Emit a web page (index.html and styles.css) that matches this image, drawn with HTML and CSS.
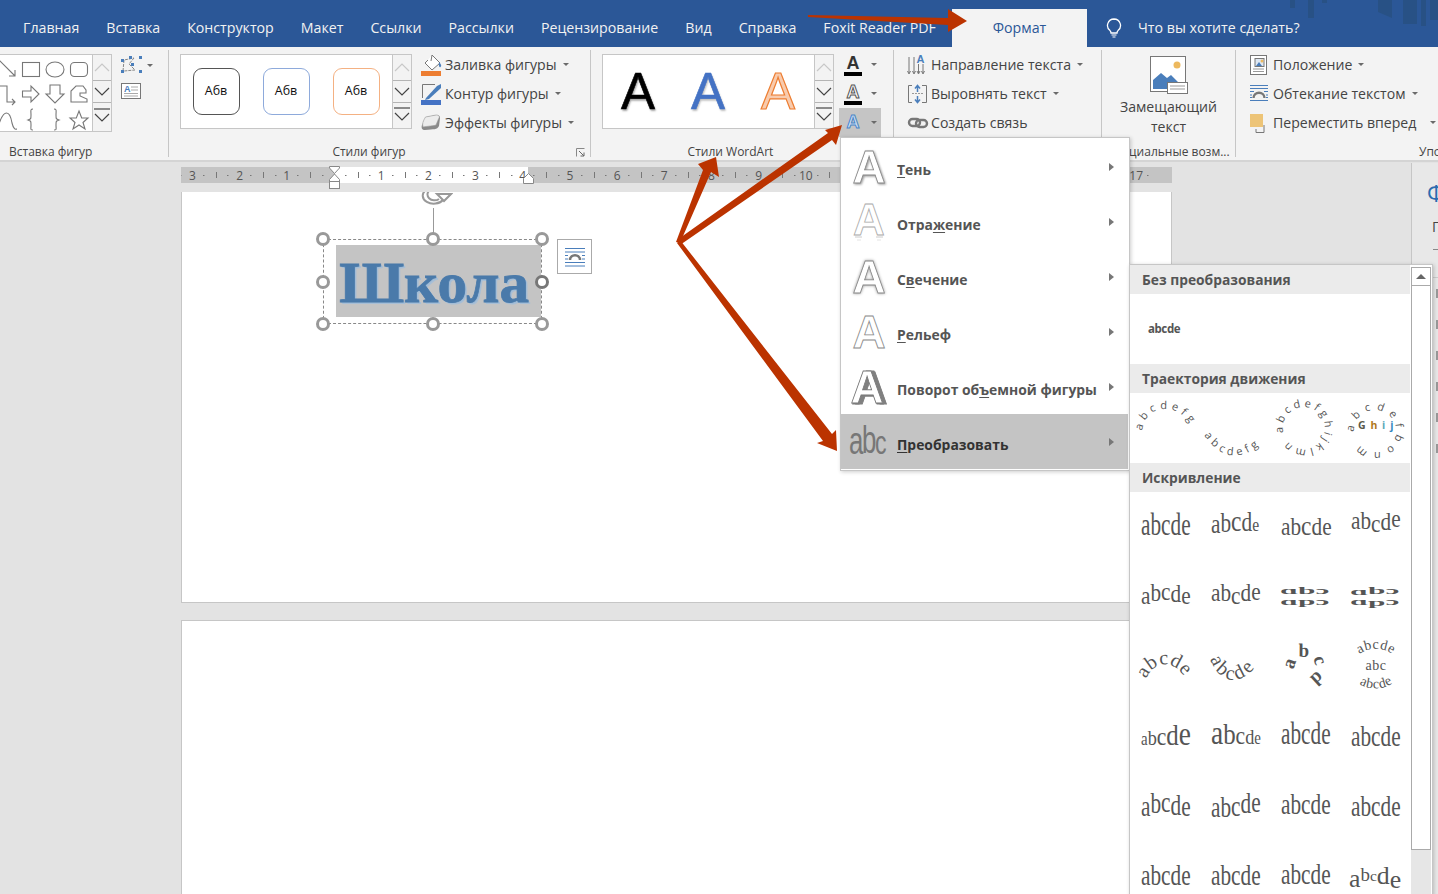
FILE: index.html
```html
<!DOCTYPE html>
<html lang="ru">
<head>
<meta charset="utf-8">
<title>Формат</title>
<link rel="stylesheet" href="styles.css">
</head>
<body>
<div class="app">
  <header class="tabbar">
    <nav class="tabs">
      <span class="tab">Главная</span><span class="tab">Вставка</span><span class="tab">Конструктор</span><span class="tab">Макет</span><span class="tab">Ссылки</span><span class="tab">Рассылки</span><span class="tab">Рецензирование</span><span class="tab">Вид</span><span class="tab">Справка</span><span class="tab">Foxit Reader PDF</span>
    </nav>
    <span class="tab-active">Формат</span>
    <div class="tellme">
      <svg class="bulb" width="16" height="20" viewBox="0 0 16 20"><path d="M8 1a6.5 6.5 0 0 0-4 11.6c.8.8 1 1.6 1 2.4h6c0-.8.2-1.6 1-2.4A6.5 6.5 0 0 0 8 1z" fill="none" stroke="#fff" stroke-width="1.3"/><path d="M5.5 17h5M6.5 19h3" stroke="#fff" stroke-width="1.2"/></svg>
      <span>Что вы хотите сделать?</span>
    </div>
    <svg class="deco" width="152" height="26" viewBox="0 0 152 26"><g fill="#27507f" opacity=".75"><rect x="4" width="5" height="8"/><rect x="22" width="6" height="18"/><rect x="36" width="5" height="3"/><path d="M92 0l0 12 14 6V0z"/><rect x="117" width="14" height="24"/><rect x="135" width="5" height="26"/><rect x="144" width="8" height="20"/></g></svg>
  </header>

  <section class="ribbon">
    <div class="group g-insert">
      <div class="group-body">
        <div class="gallery gallery-shapes">
          <svg width="92" height="76" viewBox="0 0 92 76" fill="none" stroke="#777" stroke-width="1.1">
            <path d="M-2 4L15 21M15 15v6h-6"/><rect x="22.500" y="7.500" width="17" height="14"/><ellipse cx="55" cy="14.500" rx="9" ry="7.500"/><rect x="70.500" y="7.500" width="17" height="14" rx="4"/>
            <path d="M-2 31H7V47H15M12 44l3 3-3 3"/><path d="M22.500 36H31V31L39 39L31 47V42H22.500z"/><path d="M50 30H60V39H64L55 48L46 39H50z"/><path d="M71 47V36L76 31H83L86 35V38H80V41L87 44V47z"/>
            <path d="M-2 72C4 52 10 56 12 68C14 76 16 74 17 74"/><path d="M33 57c-3 0-2 2-2 6s0 4-3 5c3 1 3 1 3 5s-1 5 2 5" transform="translate(0 -3)"/><path d="M52 57c3 0 2 2 2 6s0 4 3 5c-3 1-3 1-3 5s1 5-2 5" transform="translate(2 -3)"/><path d="M79 56L81.700 63H88L83 67.500L85 74L79 70L73 74L75 67.500L70 63H76.300z"/>
          </svg>
        </div>
        <div class="spin spin-tall"><span class="spin-up"><svg width="18" height="12" viewBox="0 0 18 12"><path d="M2 9L9 2L16 9" fill="none" stroke="#c8c8c8" stroke-width="1.2"/></svg></span><span class="spin-down"><svg width="18" height="12" viewBox="0 0 18 12"><path d="M2 2L9 9L16 2" fill="none" stroke="#444" stroke-width="1.2"/></svg></span><span class="spin-more"><svg width="18" height="18" viewBox="0 0 18 18"><path d="M1 1H17" stroke="#444" stroke-width="1.2"/><path d="M2 6L9 13L16 6" fill="none" stroke="#444" stroke-width="1.2"/></svg></span></div>
        <div class="edit-tools">
          <div class="edit-row"><svg width="22" height="18" viewBox="0 0 22 18"><path d="M2 15L3 4L13 2M13 2L8 8L14 14L3 15" fill="none" stroke="#888" stroke-dasharray="3 1"/><g fill="#4a7ebb"><rect x="0" y="3" width="3" height="3"/><rect x="8" y="0" width="3" height="3"/><rect x="18" y="0" width="3" height="3"/><rect x="10" y="7" width="3" height="3"/><rect x="0" y="14" width="3" height="3"/><rect x="18" y="14" width="3" height="3"/></g></svg><i class="caret"></i></div>
          <div class="edit-row edit-row-b"><svg width="20" height="17" viewBox="0 0 20 17"><rect x=".5" y=".5" width="19" height="15" fill="#fff" stroke="#777"/><path d="M10 4H17M10 7H17M3 10.500H17M3 13H17" stroke="#aaa"/><text x="3" y="8.500" class="ico-a">A</text></svg></div>
        </div>
      </div>
      <div class="group-label label-insert">Вставка фигур</div>
    </div>

    <div class="group g-styles">
      <div class="group-body">
        <div class="gallery gallery-wide">
          <span class="gitem"><span class="abv abv-k">Абв</span></span>
          <span class="gitem"><span class="abv abv-b">Абв</span></span>
          <span class="gitem"><span class="abv abv-o">Абв</span></span>
        </div>
        <div class="spin"><span class="spin-up"><svg width="18" height="12" viewBox="0 0 18 12"><path d="M2 9L9 2L16 9" fill="none" stroke="#c8c8c8" stroke-width="1.2"/></svg></span><span class="spin-down"><svg width="18" height="12" viewBox="0 0 18 12"><path d="M2 2L9 9L16 2" fill="none" stroke="#444" stroke-width="1.2"/></svg></span><span class="spin-more"><svg width="18" height="18" viewBox="0 0 18 18"><path d="M1 1H17" stroke="#444" stroke-width="1.2"/><path d="M2 6L9 13L16 6" fill="none" stroke="#444" stroke-width="1.2"/></svg></span></div>
        <div class="cmds cmds-shape">
          <div class="cmd"><svg width="22" height="22" viewBox="0 0 22 22"><path d="M11 1L19 9L11 16L4 9L7 6" fill="#fff" stroke="#777"/><path d="M11 1L10 7" stroke="#777"/><path d="M18 8c2 2 3 4 1.500 5s-2-2-1.500-5z" fill="#4a7ebb"/><rect y="17" width="20" height="5" fill="#ed7d31"/></svg><span>Заливка фигуры</span><i class="caret"></i></div>
          <div class="cmd"><svg width="22" height="22" viewBox="0 0 22 22"><path d="M14 1.500H1.500V15" fill="none" stroke="#777"/><path d="M5 15L16 3L20 1L20 5L8 16L4 17z" fill="#4a7ebb"/><rect y="17" width="20" height="5" fill="#4472c4"/></svg><span>Контур фигуры</span><i class="caret"></i></div>
          <div class="cmd"><svg width="22" height="22" viewBox="0 0 22 22"><path d="M5 5L15 3C18 3 19 4 19 6L18 14C16 18 13 17 4 18C1 18 0 16 1 13z" fill="#8a8a8a"/><path d="M4.500 5L15 3C18.500 3 19 5 17.500 7L15 13C13 14 7 14 2 15C1 12 2 9 4.500 5z" fill="#ececec" stroke="#999" stroke-width=".6"/></svg><span>Эффекты фигуры</span><i class="caret"></i></div>
        </div>
      </div>
      <div class="group-label label-styles">Стили фигур<svg class="launcher" width="9" height="9" viewBox="0 0 9 9"><path d="M.5 8.500V.5H8.500" fill="none" stroke="#888"/><path d="M3 3L8 8M8 4.500V8H4.500" fill="none" stroke="#666"/></svg></div>
    </div>

    <div class="group g-wordart">
      <div class="group-body">
        <div class="gallery gallery-wide">
          <span class="gitem"><span class="wa-a wa-black">A</span></span>
          <span class="gitem"><span class="wa-a wa-blue">A</span></span>
          <span class="gitem"><span class="wa-a wa-orange">A</span></span>
        </div>
        <div class="spin"><span class="spin-up"><svg width="18" height="12" viewBox="0 0 18 12"><path d="M2 9L9 2L16 9" fill="none" stroke="#c8c8c8" stroke-width="1.2"/></svg></span><span class="spin-down"><svg width="18" height="12" viewBox="0 0 18 12"><path d="M2 2L9 9L16 2" fill="none" stroke="#444" stroke-width="1.2"/></svg></span><span class="spin-more"><svg width="18" height="18" viewBox="0 0 18 18"><path d="M1 1H17" stroke="#444" stroke-width="1.2"/><path d="M2 6L9 13L16 6" fill="none" stroke="#444" stroke-width="1.2"/></svg></span></div>
        <div class="abtns">
          <div class="abtn"><span class="abtn-a a-fill">A</span><i class="caret"></i></div>
          <div class="abtn"><span class="abtn-a a-line">A</span><i class="caret"></i></div>
          <div class="abtn abtn-on"><span class="abtn-a a-fx">A</span><i class="caret"></i></div>
        </div>
      </div>
      <div class="group-label label-wordart">Стили WordArt</div>
    </div>

    <div class="group g-text">
      <div class="cmds">
        <div class="cmd"><svg width="22" height="22" viewBox="0 0 22 22"><path d="M2 3V19M7 3V19M11.500 10V19M16 10V19" stroke="#777"/><path d="M.5 17L2 20L3.500 17M5.500 17L7 20L8.500 17M10 17L11.500 20L13 17M14.500 17L16 20L17.500 17" fill="none" stroke="#777"/><text x="9.500" y="9" class="ico-a ico-a2">A</text></svg><span>Направление текста</span><i class="caret"></i></div>
        <div class="cmd"><svg width="22" height="22" viewBox="0 0 22 22"><path d="M5 2.500H1.500V19.500H5M15 2.500H19.500V19.500H15" fill="none" stroke="#777"/><path d="M5 10.500H16" stroke="#999" stroke-dasharray="2 1"/><path d="M10.500 9V3M8 5.500L10.500 2.500L13 5.500M10.500 13V19M8 16.500L10.500 19.500L13 16.500" fill="none" stroke="#4a7ebb" stroke-width="1.500"/></svg><span>Выровнять текст</span><i class="caret"></i></div>
        <div class="cmd"><svg width="22" height="22" viewBox="0 0 22 22"><g fill="none" stroke="#777" stroke-width="2.400"><rect x="2" y="7" width="11" height="7" rx="3.500"/><rect x="9" y="8" width="11" height="7" rx="3.500"/></g></svg><span>Создать связь</span></div>
      </div>
    </div>

    <div class="group g-alt">
      <div class="group-body alt-body">
        <svg width="38" height="38" viewBox="0 0 38 38"><rect x=".5" y=".5" width="35" height="35" fill="#fff" stroke="#777"/><circle cx="27" cy="9" r="3.500" fill="#edb95e"/><path d="M3 33V24L11 17L17 22L21 19L28 26V33z" fill="#4a7ebb"/><rect x="17.500" y="26.500" width="20" height="11" fill="#fff" stroke="#777"/><path d="M20 30H35M20 33H35" stroke="#999"/></svg>
        <span class="alt-text">Замещающий<br>текст</span>
      </div>
      <div class="group-label">Специальные возм...</div>
    </div>

    <div class="group g-arrange">
      <div class="cmds">
        <div class="cmd cmd-a"><svg width="18" height="20" viewBox="0 0 18 20"><rect x=".5" y=".5" width="16" height="19" fill="#fff" stroke="#777"/><path d="M3 14H14M3 16.500H14" stroke="#999"/><rect x="5" y="3.500" width="9" height="8" fill="#dfe8f2" stroke="#777"/><path d="M6 11L9 7L12 11z" fill="#4a7ebb"/><circle cx="12" cy="6" r="1.500" fill="#edb95e"/></svg><span>Положение</span><i class="caret"></i></div>
        <div class="cmd cmd-a"><svg width="18" height="18" viewBox="0 0 18 18"><path d="M0 .5H18M0 3.500H18M0 15.500H18M0 6.500H4M14 6.500H18M0 10H2M16 10H18M0 12.500H2M16 12.500H18" stroke="#4a7ebb"/><path d="M3.500 13C3.500 6 14.500 6 14.500 13" fill="none" stroke="#777" stroke-width="2.400"/></svg><span>Обтекание текстом</span><i class="caret"></i></div>
        <div class="cmd cmd-a"><svg width="18" height="20" viewBox="0 0 18 20"><path d="M14 12V19.500H6V16" fill="none" stroke="#777"/><rect width="13" height="13" y="1" fill="#edc477"/></svg><span class="cmd-wide">Переместить вперед</span><i class="caret"></i></div>
      </div>
      <div class="group-label label-arrange">Упорядочение</div>
    </div>
  </section>

  <main class="workspace">
    <div class="doc-area">
      <div class="ruler">
        <div class="ruler-scale">
          <span class="rc">3</span><span class="rc">2</span><span class="rc">1</span><span class="rc"></span><span class="rc">1</span><span class="rc">2</span><span class="rc">3</span><span class="rc">4</span><span class="rc">5</span><span class="rc">6</span><span class="rc">7</span><span class="rc">8</span><span class="rc">9</span><span class="rc">10</span><span class="rc">11</span><span class="rc">12</span><span class="rc">13</span><span class="rc">14</span><span class="rc">15</span><span class="rc">16</span><span class="rc">17</span>
        </div>
        <svg class="mk mk-left" width="12" height="26" viewBox="0 0 12 26"><path d="M.5.5H10.500V2L5.500 7.500L.5 2z" fill="#fff" stroke="#888"/><path d="M5.500 8L10.500 13.500V15.500H.5V13.500z" fill="#fff" stroke="#888"/><rect x=".5" y="15.500" width="10" height="7" fill="#fff" stroke="#888"/></svg>
        <svg class="mk mk-right" width="12" height="12" viewBox="0 0 12 12"><path d="M5.500.5L10.500 5.500V10.500H.5V5.500z" fill="#fff" stroke="#888"/></svg>
      </div>
      <article class="page page-first">
        <svg class="rot" width="34" height="24" viewBox="0 0 34 24"><path d="M24 8A11 8 0 1 1 7 -2" fill="none" stroke="#999" stroke-width="2"/><path d="M20 7A6 5 0 1 1 11 -2" fill="none" stroke="#999" stroke-width="2"/><path d="M18 2H32L25 9z" fill="#fff" stroke="#999" stroke-width="2"/></svg>
        <span class="rot-line"></span>
        <div class="selbox">
          <div class="wordart"><span class="wordart-text">Школа</span></div>
          <i class="h h-tl"></i><i class="h h-tc"></i><i class="h h-tr"></i><i class="h h-ml"></i><i class="h h-mr"></i><i class="h h-bl"></i><i class="h h-bc"></i><i class="h h-br"></i>
        </div>
        <span class="layout-btn"><svg width="22" height="20" viewBox="0 0 22 20"><path d="M1 1.500H21M1 5H21M1 8.500H4M18 8.500H21M1 12H4M18 12H21M1 15.500H21M1 19H21" stroke="#4a7ebb"/><path d="M6 13C6 6.500 16 6.500 16 13" fill="none" stroke="#777" stroke-width="2.500"/></svg></span>
      </article>
      <article class="page page-second"></article>
    </div>
    <aside class="pane">
      <span class="pane-phi">Ф</span>
      <span class="pane-g">Г</span>
      <span class="pane-rule pane-rule-a"></span>
      <span class="pane-rule"></span>
      <span class="pane-marks"><i></i><i></i><i></i><i></i><i></i><i></i></span>
    </aside>
  </main>

  <div class="menu">
    <div class="mi"><span class="mi-ico"><svg width="40" height="44" viewBox="0 0 40 44"><text x="20" y="38" class="big-a fx-shadow">A</text></svg></span><span class="mi-text"><u>Т</u>ень</span><i class="tri"></i></div>
    <div class="mi"><span class="mi-ico"><svg width="40" height="44" viewBox="0 0 40 44"><text x="20" y="35" class="big-a big-thin">A</text><path d="M6 37H13M27 37H34" stroke="#ccc"/><path d="M8 40H12M28 40H32" stroke="#e4e4e4"/></svg></span><span class="mi-text">Отра<u>ж</u>ение</span><i class="tri"></i></div>
    <div class="mi"><span class="mi-ico"><svg width="40" height="44" viewBox="0 0 40 44"><text x="20" y="38" class="big-a fx-glow">A</text></svg></span><span class="mi-text">С<u>в</u>ечение</span><i class="tri"></i></div>
    <div class="mi"><span class="mi-ico"><svg width="40" height="44" viewBox="0 0 40 44"><text x="20" y="38" class="big-a big-bevel">A</text></svg></span><span class="mi-text"><u>Р</u>ельеф</span><i class="tri"></i></div>
    <div class="mi"><span class="mi-ico"><svg width="40" height="44" viewBox="0 0 40 44"><text x="18" y="38" class="big-a fx-3d">A</text></svg></span><span class="mi-text">Поворот об<u>ъ</u>емной фигуры</span><i class="tri"></i></div>
    <div class="mi mi-on"><span class="mi-ico"><svg width="40" height="34" viewBox="0 0 40 34"><text transform="translate(0 29) scale(.68 1)" class="abc-ico">a<tspan class="abc-b" dy="-1">b</tspan><tspan class="abc-c" dy="1">c</tspan></text></svg></span><span class="mi-text"><u>П</u>реобразовать</span><i class="tri"></i></div>
  </div>

  <div class="submenu">
    <div class="sub-list">
      <div class="sub-head">Без преобразования</div>
      <div class="sub-plain"><span>abcde</span></div>
      <div class="sub-head">Траектория движения</div>
      <div class="sub-grid">
        <svg class="cell" viewBox="0 0 70 70"><defs><path id="p1" d="M11 38Q15 16 34 16Q52 16 62 36"/><path id="p2" d="M3 42Q30 82 68 44"/><path id="p3" d="M12.500 40A21 21 0 1 1 15 46"/><path id="p4" d="M13 39A21 21 0 1 1 15 47"/></defs><text class="tr"><textPath href="#p1">abcdefg</textPath></text></svg>
        <svg class="cell" viewBox="0 0 70 70"><text class="tr"><textPath href="#p2">abcdefg</textPath></text></svg>
        <svg class="cell" viewBox="0 0 70 70"><text class="tr tr-wide"><textPath href="#p3">abcdefghijklmn</textPath></text></svg>
        <svg class="cell" viewBox="0 0 70 70"><text class="tr tr-wider"><textPath href="#p4">abcdefbonml</textPath></text><text x="17" y="36" class="ghij">G<tspan class="c-h">h</tspan><tspan class="c-i">i</tspan><tspan class="c-j">j</tspan></text></svg>
      </div>
      <div class="sub-head">Искривление</div>
      <div class="sub-grid sub-grid-warp">
        <svg class="cell" viewBox="0 0 70 70"><text class="wt" transform="translate(10 42) scale(.71 1.050)">abcde</text></svg>
        <svg class="cell" viewBox="0 0 70 70"><text class="wt" transform="translate(10 40) scale(.71 .9)" dy="0 -1 -1 0 0">ab<tspan class="fs-l">c</tspan>d<tspan class="fs-s">e</tspan></text></svg>
        <svg class="cell" viewBox="0 0 70 70"><text class="wt" transform="translate(10 42) scale(.71 .85)">ab<tspan class="fs-l">c</tspan>de</text></svg>
        <svg class="cell" viewBox="0 0 70 70"><text class="wt" transform="translate(10 36) scale(.71 .85)" dy="0 0 3 -2 -3">abcde</text></svg>
        <svg class="cell" viewBox="0 0 70 70"><text class="wt" transform="translate(10 41) scale(.71 .85)" dy="0 -3 -2 3 2">abcde</text></svg>
        <svg class="cell" viewBox="0 0 70 70"><text class="wt" transform="translate(10 38) scale(.71 .85)" dy="0 0 4 -4 -1">abcde</text></svg>
        <svg class="cell" viewBox="0 0 70 70"><text class="wb" transform="translate(9 31) scale(1.650 .6)">ɑbɔ</text><text class="wb" transform="translate(9 42) scale(1.650 .6)">ɑpɔ</text></svg>
        <svg class="cell" viewBox="0 0 70 70"><text class="wb" transform="translate(9 31) scale(1.650 .6)" dy="1 -1 0">ɑbɔ</text><text class="wb" transform="translate(9 42) scale(1.650 .6)" dy="0 1 -1">ɑpɔ</text></svg>
        <svg class="cell" viewBox="0 0 70 70"><defs><path id="a1" d="M15 46C24 26 44 26 56 48"/><path id="a2" d="M9 26C20 54 44 54 60 25"/><path id="a3" d="M24 37A10.500 10.500 0 1 1 38 44"/><path id="a4" d="M12 27C24 12 46 12 58 27"/><path id="a5" d="M12 46C24 59 46 59 58 44"/></defs><text class="wr"><textPath href="#a1">abcde</textPath></text></svg>
        <svg class="cell" viewBox="0 0 70 70"><text class="wr wr-w"><textPath href="#a2">abcde</textPath></text></svg>
        <svg class="cell" viewBox="0 0 70 70"><text class="wr wr-bold"><textPath href="#a3">abcd</textPath></text></svg>
        <svg class="cell" viewBox="0 0 70 70"><text class="wm"><textPath href="#a4" startOffset="50%">abcde</textPath></text><text x="35" y="37" class="wm">abc</text><text class="wm"><textPath href="#a5" startOffset="50%">abcde</textPath></text></svg>
        <svg class="cell" viewBox="0 0 70 70"><text class="wt" transform="translate(10 42) scale(.83 1)"><tspan class="fs-xs">a</tspan><tspan class="fs-s">b</tspan><tspan class="fs-m">c</tspan>d<tspan class="fs-l">e</tspan></text></svg>
        <svg class="cell" viewBox="0 0 70 70"><text class="wt" transform="translate(10 41) scale(.83 1)"><tspan class="fs-l">a</tspan>b<tspan class="fs-m">c</tspan><tspan class="fs-s">d</tspan><tspan class="fs-xs">e</tspan></text></svg>
        <svg class="cell" viewBox="0 0 70 70"><text class="wt" transform="translate(10 41) scale(.71 1.050)">abcde</text></svg>
        <svg class="cell" viewBox="0 0 70 70"><text class="wt" transform="translate(10 43) scale(.71 .95)">abcde</text></svg>
        <svg class="cell" viewBox="0 0 70 70"><text class="wt" transform="translate(10 43) scale(.71 .95)" dy="0 -3 -1 3 1">abcde</text></svg>
        <svg class="cell" viewBox="0 0 70 70"><text class="wt" transform="translate(10 44) scale(.71 .95)" dy="0 0 -1 -3 -1">abcde</text></svg>
        <svg class="cell" viewBox="0 0 70 70"><text class="wt" transform="translate(10 41) scale(.71 1)">abcde</text></svg>
        <svg class="cell" viewBox="0 0 70 70"><text class="wt" transform="translate(10 43) scale(.71 1)">abcde</text></svg>
        <svg class="cell" viewBox="0 0 70 70"><text class="wt" transform="translate(10 42) scale(.71 1)">abcde</text></svg>
        <svg class="cell" viewBox="0 0 70 70"><text class="wt" transform="translate(10 42) scale(.71 .95)">abcde</text></svg>
        <svg class="cell" viewBox="0 0 70 70"><text class="wt" transform="translate(10 41) scale(.71 .95)">abcde</text></svg>
        <svg class="cell" viewBox="0 0 70 70"><text class="wt" transform="translate(8 44) scale(.86 .85)"><tspan>a</tspan><tspan class="fs-s" dy="-7">b</tspan><tspan class="fs-xs" dy="0">c</tspan><tspan dy="3">d</tspan><tspan dy="5">e</tspan></text></svg>
      </div>
    </div>
    <div class="scroll">
      <span class="scroll-up"><i></i></span>
      <span class="scroll-thumb"></span>
    </div>
  </div>

  <svg class="arrows" width="1438" height="894" viewBox="0 0 1438 894">
    <g fill="#bb3300">
      <polygon points="808,15 948,18 948,9 967,21 948,32 948,25 808,17"/>
      <polygon points="676,242 703,170 698,164 716,157 719,177 711,172 680,243"/>
      <polygon points="677,240 828,133 825,130 842,125 836,145 832,140 680,245"/>
      <polygon points="677,243 823,441 817,443 837,451 836,430 832,434 680,240"/>
    </g>
  </svg>
</div>
</body>
</html>
```
FILE: styles.css
```css
* { box-sizing: border-box; }
html, body { margin: 0; padding: 0; }
body { width: 1438px; height: 894px; overflow: hidden; background: #e3e3e3; font-family: "Open Sans", "Noto Sans", sans-serif; color: #444; }
.app { position: relative; width: 1438px; height: 894px; overflow: hidden; }
svg { display: block; flex: none; }

/* tab bar */
.tabbar { position: relative; display: flex; align-items: stretch; height: 47px; background: #2b5797; color: #f2f2f2; font-size: 14.2px; }
.tabs { display: flex; padding-left: 9.500px; width: 952px; }
.tab { display: flex; align-items: center; padding: 8px 13.500px 0; white-space: nowrap; }
.tab-active { display: flex; align-items: center; justify-content: center; width: 135px; margin-top: 9px; background: #f3f3f3; color: #2b5797; padding-bottom: 1px; }
.tellme { display: flex; align-items: center; gap: 16px; padding: 8px 0 0 19px; }
.deco { position: absolute; top: 0; left: 1286px; }

/* ribbon */
.ribbon { display: flex; height: 115px; padding: 3px 0 3px; background: #f3f3f3; border-bottom: 2px solid #d4d4d4; font-size: 13.6px; }
.group { position: relative; display: flex; flex-direction: column; height: 107px; border-right: 1px solid #c6c6c6; flex: none; }
.group-body { display: flex; flex: 1; min-height: 0; }
.group-label { height: 13px; line-height: 16px; font-size: 12px; color: #444; text-align: center; white-space: nowrap; }
.g-insert { width: 169px; }
.g-styles { width: 422px; padding-left: 11px; }
.g-wordart { width: 303px; padding-left: 11px; }
.g-text { width: 208px; padding-left: 13px; }
.g-alt { width: 134px; }
.g-arrange { flex: 1; border-right: 0; padding-left: 14px; min-width: 0; }
.label-insert { text-align: left; padding-left: 9px; }
.label-styles { position: relative; padding-right: 32px; }
.label-wordart { padding-right: 34px; }
.label-arrange { text-align: left; padding-left: 183px; margin-top: auto; overflow: hidden; margin-left: -14px; }
.launcher { position: absolute; right: 5px; top: 4px; }

.gallery { background: #fff; border: 1px solid #c6c6c6; border-right: 0; margin-top: 4px; }
.gallery-shapes { width: 92px; height: 78px; border-left: 0; overflow: hidden; }
.gallery-wide { display: flex; width: 212px; height: 75px; }
.spin { display: flex; flex-direction: column; width: 20px; height: 75px; margin-top: 4px; border: 1px solid #c6c6c6; }
.spin-tall { height: 78px; }
.spin span { display: flex; align-items: center; justify-content: center; }
.spin-up { height: 25px; }
.spin-down { height: 23px; border-top: 1px solid #b4b4b4; border-bottom: 1px solid #b4b4b4; }
.spin-more { flex: 1; }
.edit-tools { display: flex; flex-direction: column; margin: 6px 0 0 9px; }
.edit-row { display: flex; align-items: center; gap: 4px; }
.edit-row-b { margin-top: 9px; }
.ico-a { font: 700 9px "Liberation Sans", sans-serif; fill: #4a7ebb; }
.ico-a2 { font-size: 11px; }
.caret { display: inline-block; width: 0; height: 0; border-left: 3.500px solid transparent; border-right: 3.500px solid transparent; border-top: 3.500px solid #6a6a6a; flex: none; }

.gitem { display: flex; align-items: center; justify-content: center; width: 70px; }
.abv { display: flex; align-items: center; justify-content: center; width: 47px; height: 47px; padding-bottom: 3px; border-radius: 9px; border: 1.500px solid #555; font-size: 12.500px; color: #111; }
.abv-b { border-color: #8eaadb; }
.abv-o { border-color: #f4b183; }
.wa-a { font: 400 51px/1 "Liberation Sans", sans-serif; }
.wa-black { color: #000; -webkit-text-stroke: .6px #000; text-shadow: 1px 2px 2px rgba(0,0,0,.35); }
.wa-blue { color: #4472c4; -webkit-text-stroke: .6px #4472c4; text-shadow: 1px 2px 2px rgba(0,0,0,.25); }
.wa-orange { color: #f8cbad; -webkit-text-stroke: 1.200px #ed7d31; }

.cmds { display: flex; flex-direction: column; flex: none; }
.cmds-shape { margin-left: 9px; }
.cmd { display: flex; align-items: center; height: 29px; white-space: nowrap; gap: 2px; font-size: 14.1px; }
.cmd span { margin-right: 4px; }
.cmd > svg { width: 22px; }
.cmd-a > svg { width: 18px; margin-right: 3px; }
.cmd-wide { margin-right: 12px !important; }

.abtns { display: flex; flex-direction: column; margin-left: 5px; }
.abtn { display: flex; align-items: center; gap: 9px; width: 42px; height: 29px; padding-left: 5px; }
.abtn-on { background: #c5c5c5; }
.abtn-a { position: relative; display: block; width: 18px; height: 24px; font: 700 18px/20px "Liberation Sans", sans-serif; text-align: center; color: #333; }
.a-fill::after, .a-line::after { content: ""; position: absolute; left: 0; right: 0; bottom: 1px; height: 4px; background: #000; }
.a-line { color: #fff; -webkit-text-stroke: 1px #555; }
.a-fx { color: #cfe0f3; -webkit-text-stroke: 1px #4a86c8; height: 22px; }

.alt-body { flex-direction: column; align-items: center; padding-top: 6px; }
.alt-text { margin-top: 3px; text-align: center; line-height: 20px; font-size: 14.1px; }

/* workspace */
.workspace { display: flex; height: 732px; }
.doc-area { position: relative; flex: 1; min-width: 0; padding: 5px 0 0 181px; overflow: hidden; }
.ruler { position: relative; width: 991px; height: 16px; background: linear-gradient(to right, #c4c4c4 154px, #fff 154px, #fff 347px, #c4c4c4 347px); }
.ruler-scale { display: flex; height: 16px; margin-left: -12.200px; width: 1003.200px; overflow: hidden; clip-path: inset(0 0 0 12.200px); }
.rc { flex: none; width: 47.200px; height: 16px; line-height: 17px; text-align: center; font-size: 12px; color: #555;
  background:
    linear-gradient(#777, #777) 25% 8px / 1.500px 1px no-repeat,
    linear-gradient(#777, #777) 75% 8px / 1.500px 1px no-repeat,
    linear-gradient(#777, #777) 0 5px / 1px 6px no-repeat; }
.mk { position: absolute; }
.mk-left { left: 148px; top: -1px; }
.mk-right { left: 342px; top: 6px; }
.page { position: relative; width: 991px; background: #fff; border: 1px solid #c6c6c6; overflow: hidden; }
.page-first { height: 411px; margin-top: 9px; border-top: 0; }
.page-second { height: 300px; margin-top: 17px; }
.rot { position: absolute; left: 237px; top: 0; }
.rot-line { position: absolute; left: 251px; top: 16px; width: 1px; height: 26px; background: #999; }
.selbox { position: absolute; left: 141px; top: 47px; width: 219px; height: 85px; border: 1px dashed #888; }
.wordart { position: absolute; left: 12px; top: 5px; width: 205px; height: 72px; background: #c4c4c4; overflow: hidden; display: flex; align-items: center; justify-content: center; }
.wordart-text { display: block; margin: 3px 8px 0 0; font: 700 58px/72px "Liberation Serif", serif; color: #4a7aaa; -webkit-text-stroke: .8px #4a7aaa; text-shadow: 1px 1px 0 #9dbad6, 2px 2px 0 #a8bfd6; transform: scaleX(1.020); white-space: nowrap; }
.h { position: absolute; width: 14px; height: 14px; border-radius: 50%; background: #fff; border: 3px solid #999; }
.h-tl { left: -8px; top: -8px; }
.h-tc { left: 102px; top: -8px; }
.h-tr { right: -8px; top: -8px; }
.h-ml { left: -8px; top: 35px; }
.h-mr { right: -8px; top: 35px; border-color: #777; }
.h-bl { left: -8px; bottom: -8px; }
.h-bc { left: 102px; bottom: -8px; }
.h-br { right: -8px; bottom: -8px; }
.layout-btn { position: absolute; left: 375px; top: 47px; display: flex; align-items: center; justify-content: center; width: 35px; height: 35px; background: #fff; border: 1px solid #aaa; }

.pane { position: relative; flex: none; width: 27px; margin-top: 1px; border-left: 1px solid #c6c6c6; background: #e8e8e8; overflow: hidden; display: flex; flex-direction: column; }
.pane-phi { margin: 16px 0 0 15px; font-size: 23px; line-height: 28px; color: #2b6cb0; }
.pane-g { margin: 10px 0 0 20px; font-size: 14px; line-height: 20px; color: #444; white-space: nowrap; }
.pane-rule { height: 1px; width: 10px; margin: 20px 0 0 21px; background: #888; }
.pane-rule-a { margin-top: 12px; }
.pane-rule + .pane-rule { margin-top: 27px; background: #ccc; }
.pane-marks { display: flex; flex-direction: column; gap: 22px; margin: 11px 0 0 24px; }
.pane-marks i { display: block; width: 3px; height: 9px; background: #999; }

/* effects menu */
.menu { position: absolute; z-index: 5; left: 840px; top: 137px; width: 290px; height: 334px; padding: 1px 1px 1px 0; background: #fff; border: 1px solid #c6c6c6; box-shadow: 1px 1px 4px rgba(0,0,0,.2); }
.mi { display: flex; align-items: center; height: 55px; padding-right: 14px; color: #555; font-size: 13.900px; font-weight: 700; }
.mi-on { background: #c4c4c4; color: #333; }
.mi-ico { display: flex; justify-content: center; width: 56px; flex: none; color: #666; }
.mi-text { flex: 1; margin-top: 6px; white-space: nowrap; }
.mi u { text-underline-offset: 2px; text-decoration-thickness: 1px; }
.tri { width: 0; height: 0; flex: none; border-top: 4.500px solid transparent; border-bottom: 4.500px solid transparent; border-left: 5px solid #777; }
.big-a { font: 700 46px "Liberation Sans", sans-serif; text-anchor: middle; fill: #fff; stroke: #888; stroke-width: .8; }
.big-thin { font-size: 44px; stroke: #aaa; }
.big-bevel { stroke: #888; }
.fx-shadow { filter: drop-shadow(1.500px 1.500px 1.200px rgba(0,0,0,.4)); }
.fx-glow { filter: drop-shadow(0 0 1.500px rgba(0,0,0,.4)); }
.fx-3d { filter: drop-shadow(3px 0 0 #808080) drop-shadow(1px 1px 0 #808080); stroke: #777; }
.abc-ico { font: 400 38px "Liberation Sans", sans-serif; fill: #777; letter-spacing: -2px; }
.abc-b { font-size: 38px; }
.abc-c { font-size: 34px; }

/* transform gallery */
.submenu { position: absolute; z-index: 6; left: 1129px; top: 264px; width: 304px; height: 640px; display: flex; background: #fff; border: 1px solid #c6c6c6; box-shadow: 1px 1px 4px rgba(0,0,0,.2); }
.sub-list { width: 280px; flex: none; }
.sub-head { height: 29px; line-height: 29px; padding-left: 12px; background: #ebebeb; color: #555; font-size: 13.800px; font-weight: 700; white-space: nowrap; }
.sub-plain { height: 70px; display: flex; align-items: center; padding: 0 0 2px 18px; font: 700 11.500px "Noto Sans", sans-serif; color: #555; letter-spacing: -.4px; }
.sub-grid { display: grid; grid-template-columns: repeat(4, 70px); grid-auto-rows: 70px; padding-left: 1px; }
.sub-grid-warp { padding-top: 1px; }
.cell { width: 70px; height: 70px; overflow: visible; }
.tr { font: 400 11px "Open Sans", sans-serif; fill: #555; letter-spacing: 4px; }
.tr-wide { letter-spacing: 3.300px; }
.tr-wider { letter-spacing: 5.700px; }
.ghij { font: 700 10.500px "Open Sans", sans-serif; fill: #5a5a4a; letter-spacing: 4.800px; }
.c-h { fill: #b07820; }
.c-i { fill: #58a8b8; }
.c-j { fill: #3888c0; }
.wt { font: 400 30px "Liberation Serif", serif; fill: #555; }
.fs-xs { font-size: 18px; }
.fs-s { font-size: 22px; }
.fs-m { font-size: 26px; }
.fs-l { font-size: 33px; }
.wb { font: 700 19px "Liberation Serif", serif; fill: #555; }
.wr { font: 400 20px "Liberation Serif", serif; fill: #555; letter-spacing: .5px; }
.wr-w { letter-spacing: 3px; }
.wr-bold { font-weight: 700; font-size: 19px; letter-spacing: 3px; }
.wm { font: 400 14px "Liberation Serif", serif; fill: #555; text-anchor: middle; letter-spacing: .6px; }
.scroll { display: flex; flex-direction: column; width: 20px; margin-left: 1px; margin-top: 2px; height: 583px; box-shadow: 0 640px 0 640px #e6e6e6; clip-path: inset(0 0 -60px 0); }
.scroll-up { display: flex; align-items: center; justify-content: center; height: 19px; border: 1px solid #aaa; flex: none; }
.scroll-up i { width: 0; height: 0; border-left: 5px solid transparent; border-right: 5px solid transparent; border-bottom: 5px solid #666; }
.scroll-thumb { flex: 1; border: 1px solid #aaa; border-top: 0; background: #fff; }

.arrows { position: absolute; z-index: 10; left: 0; top: 0; pointer-events: none; }
```
